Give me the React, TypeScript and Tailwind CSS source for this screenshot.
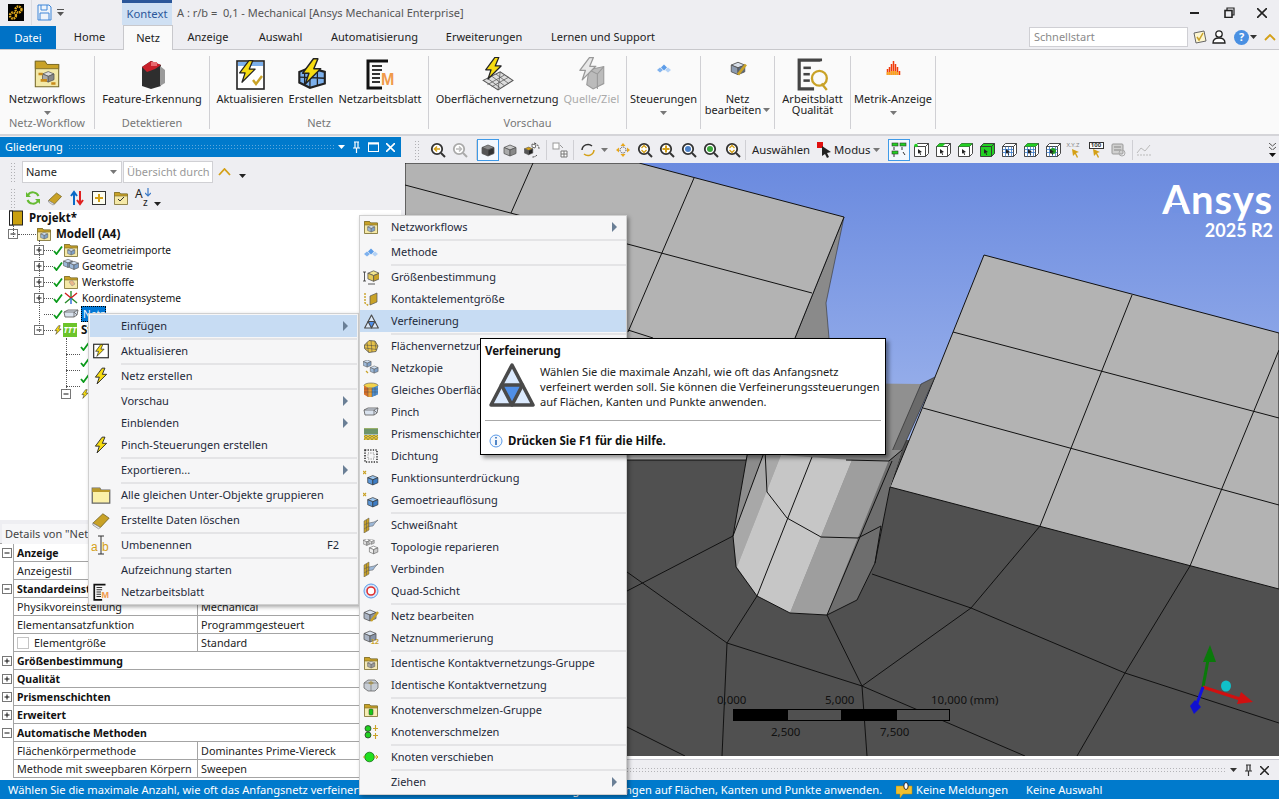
import type { ReactNode } from 'react';

const GOLD = '#c9a227';

const I = ({ s = 16, v = 16, children }: { s?: number; v?: number; children: ReactNode }) => (
  <svg width={s} height={s} viewBox={`0 0 ${v} ${v}`} className="block shrink-0">{children}</svg>
);

const BoltPath = ({ fill = '#f7dc11', stroke = '#222', w = 0.8 }: { fill?: string; stroke?: string; w?: number }) => (
  <path d="M9 1 3 9h3.5L4.5 15 13 6.5H9.2L11.5 1z" fill={fill} stroke={stroke} strokeWidth={w} strokeLinejoin="round" />
);
const BoxShape = ({ t = '#cfdff2', l = '#9db8d8', r = '#7fa0c8', st = '#555' }: { t?: string; l?: string; r?: string; st?: string }) => (
  <g stroke={st} strokeWidth="0.8" strokeLinejoin="round">
    <path d="M8 3 14 5.5 8 8 2 5.5z" fill={t} />
    <path d="M2 5.5 8 8v6l-6-2.5z" fill={l} />
    <path d="M14 5.5 8 8v6l6-2.5z" fill={r} />
  </g>
);
const FolderShape = ({ body = '#f5e9a8' }: { body?: string }) => (
  <g>
    <path d="M1.5 14.5V2.5h5l1 1.5h7v10.5z" fill={body} stroke="#77692a" strokeWidth="0.8" />
    <path d="M1.5 2.5h5l1 1.5h7v2h-13z" fill={GOLD} stroke="#77692a" strokeWidth="0.6" />
  </g>
);

const Bolt = ({ s = 16 }: { s?: number }) => <I s={s}><BoltPath /></I>;
const Box = ({ s = 16, t, l, r }: { s?: number; t?: string; l?: string; r?: string }) => <I s={s}><BoxShape t={t} l={l} r={r} /></I>;
const Folder = ({ children, body }: { children?: ReactNode; body?: string }) => (
  <I><FolderShape body={body} />{children}</I>
);
const MiniCube = () => (
  <g transform="translate(3.4 4.6) scale(0.6)"><BoxShape /></g>
);
const WorksheetIcon = ({ s = 16 }: { s?: number }) => (
  <I s={s} v={32}>
    <path d="M24 3H4v27h14" fill="none" stroke="#111" strokeWidth="3" />
    <path d="M8 8h10M8 12h10M8 16h8M8 20h8M8 24h8" stroke="#333" strokeWidth="2" />
    <text x="17" y="27" fontSize="16" fontWeight="700" fill="#f09a4a" fontFamily="Liberation Sans, sans-serif">M</text>
  </I>
);
const Eraser = () => (
  <I>
    <path d="M1.5 10.5 9.5 3l5 3.5-7 7.5z" fill={GOLD} stroke="#6a5a1a" strokeWidth="0.7" />
    <path d="M1.5 10.5 7.5 14 6 15 1.5 12z" fill="#eee" stroke="#888" strokeWidth="0.7" />
  </I>
);
const RefineIcon = ({ s = 16, light = '#dbeafe', mid = '#4f8fe8', st = '#4a4a4a' }: { s?: number; light?: string; mid?: string; st?: string }) => (
  <I s={s} v={46}>
    <path d="M23 3 44 43H2z" fill={light} stroke={st} strokeWidth="3.5" strokeLinejoin="round" />
    <path d="M12.5 23h21L23 43z" fill={mid} stroke={st} strokeWidth="3.5" strokeLinejoin="round" />
  </I>
);
const MeshPatch = () => (
  <I>
    <path d="M1.5 7 6 2.5l6 .5 3 5-2 5.5-7 1-4.5-4z" fill="#e7c24a" stroke="#444" strokeWidth="0.7" />
    <path d="M4 4.5l1.5 10M8 2.5l1 11.5M12 3.5 13 12M1.5 7l13.5 1M2 10l11.5 1.5" stroke="#444" strokeWidth="0.5" fill="none" />
  </I>
);
const MethodIcon = () => (
  <I>
    <path d="M1 10l3-2.5 3 2.5-3 2.5z" fill="#7fb2ee" />
    <path d="M5 7.5l3-3 3 3-3 3z" fill="#5c9ce8" />
    <path d="M9 10l3-2.5 3 2.5-3 2.5z" fill="#b3d2f6" />
  </I>
);
const ArrowRight = () => <span className="ml-auto mr-[9px] h-0 w-0 border-y-[5px] border-l-[5px] border-y-transparent border-l-[#6a7f96]" />;
const Caret = ({ c = '#777' }: { c?: string }) => (
  <svg width="7" height="4" viewBox="0 0 7 4" className="block shrink-0"><path d="M0 0h7L3.5 4z" fill={c} /></svg>
);
const Exp = ({ plus }: { plus?: boolean }) => (
  <svg width="10" height="10" viewBox="0 0 10 10" className="block shrink-0">
    <rect x=".5" y=".5" width="9" height="9" fill="#fff" stroke="#777" />
    <path d="M2.5 5h5" stroke="#111" />
    {plus && <path d="M5 2.5v5" stroke="#111" />}
  </svg>
);
const Tick = () => (
  <svg width="10" height="10" viewBox="0 0 10 10" className="block shrink-0"><path d="M1 6l2.5 3L9 1.5" fill="none" stroke="#0a9a1a" strokeWidth="1.8" /></svg>
);

// ---- menu icons
const menu1Icons: Record<string, ReactNode> = {
  update: (
    <I s={18} v={32}>
      <rect x="3" y="4" width="26" height="24" fill="#fff" stroke="#222" strokeWidth="2" />
      <g transform="translate(2 3) scale(1.5)"><BoltPath /></g>
    </I>
  ),
  bolt: <Bolt s={18} />,
  folder: <I s={20}><path d="M1 14.5V2.5h6l1 1.5h7v10.5z" fill="#fbf0a8" stroke="#666" /><path d="M1 2.5h6l1 1.5h7v1.5H1z" fill="#b9982a" /></I>,
  eraser: <I s={20}><path d="M1.5 10.5 9.5 3l5 3.5-7 7.5z" fill={GOLD} stroke="#6a5a1a" strokeWidth="0.6" /><path d="M1.5 10.5 7.5 14 6 15 1.5 12z" fill="#eee" stroke="#888" strokeWidth="0.6" /></I>,
  rename: (
    <I s={22} v={22}>
      <text x="1" y="17" fontSize="12" fill="#d4a017" fontFamily="Liberation Sans, sans-serif">a</text>
      <text x="12" y="17" fontSize="12" fill="#d4a017" fontFamily="Liberation Sans, sans-serif">b</text>
      <path d="M8 2h6M11 2v18M8 20h6" stroke="#333" fill="none" />
    </I>
  ),
  sheet: <WorksheetIcon s={18} />,
};

const menu2Icons: Record<string, ReactNode> = {
  wf: <Folder><MiniCube /></Folder>,
  method: <MethodIcon />,
  size: (
    <I>
      <g transform="translate(3 -1) scale(0.95)"><BoxShape t="#f3e58c" l="#e4c95a" r="#c9a227" /></g>
      <path d="M1.5 3v9M0 3h3M0 12h3M5 15h7" stroke="#333" strokeWidth="0.8" />
    </I>
  ),
  contact: (
    <I>
      <path d="M2 2v10l4 3" stroke={GOLD} strokeWidth="1.4" strokeDasharray="2 1" fill="none" />
      <path d="M7 5l7-3v9l-7 3z" fill="#c9a227" stroke="#555" strokeWidth="0.7" />
    </I>
  ),
  refine: <RefineIcon s={15} light="#dbe8f8" />,
  patch: <MeshPatch />,
  copy: (
    <I>
      <g transform="translate(-1 -2) scale(0.65)"><BoxShape /></g>
      <g transform="translate(6 4) scale(0.65)"><BoxShape /></g>
      <path d="M3 11l2 2" stroke={GOLD} strokeWidth="1.2" />
    </I>
  ),
  uniform: (
    <I>
      <ellipse cx="8" cy="3.5" rx="7" ry="2.5" fill="#f2d24a" stroke="#555" strokeWidth="0.6" />
      <path d="M1 3.5v9L5 15V6z" fill="#d8712a" />
      <path d="M5 6v9h4V6z" fill="#e8a03a" />
      <path d="M9 6v9l6-2.5v-9z" fill="#4f8fd0" />
      <path d="M1 7l14 0M1 10l14 0M5 6v9M9 6v9M12 5v9" stroke="#444" strokeWidth="0.4" />
    </I>
  ),
  pinch: (
    <I>
      <path d="M1 6l4-2h10l-1 5-3 2H2z" fill="#d9e2ee" stroke="#666" strokeWidth="0.9" />
      <path d="M1 6h10l3 3M11 6v5M11 6l4-2" stroke="#666" strokeWidth="0.8" fill="none" />
    </I>
  ),
  prism: (
    <I>
      <rect x="1" y="2" width="14" height="6" fill="#9ab06a" />
      <path d="M1 4h14M1 6h14M1 8h14" stroke="#2a6a6a" strokeWidth="0.8" />
      <rect x="1" y="9" width="14" height="5" fill="#e8c830" />
      <path d="M1 11l2-2 2 2 2-2 2 2 2-2 2 2 2-2M1 14l2-3 2 3 2-3 2 3 2-3 2 3 2-3" stroke="#555" strokeWidth="0.5" fill="none" />
    </I>
  ),
  gasket: (
    <I>
      <rect x="2" y="2" width="12" height="12" fill="none" stroke="#333" strokeWidth="1.6" strokeDasharray="1.3 1.3" />
      <rect x="5" y="5" width="6" height="6" fill="none" stroke="#777" strokeWidth="1" strokeDasharray="1 1.4" />
    </I>
  ),
  suppress: (
    <I>
      <path d="M0 1l3 3M3 1 0 4" stroke={GOLD} strokeWidth="1.2" />
      <g transform="translate(3 3) scale(0.85)"><BoxShape t="#9bc4ec" l="#5b97d8" r="#3c7cc4" st="#333" /></g>
    </I>
  ),
  weld: (
    <I>
      <path d="M1 4l5-3v12l-5 3z" fill={GOLD} stroke="#555" strokeWidth="0.5" />
      <path d="M1 8l5-2.5M1 12l5-3M3.5 3v11" stroke="#555" strokeWidth="0.5" />
      <path d="M6 6l5-1 4-2-3 3-2 3-4 .5z" fill="#9db8d8" stroke="#555" strokeWidth="0.5" />
    </I>
  ),
  topo: (
    <I>
      <g transform="translate(-1 -2) scale(0.6)"><BoxShape t="#fff" l="#ddd" r="#bbb" /></g>
      <g transform="translate(5 -1) scale(0.45)"><BoxShape t="#fff" l="#ddd" r="#bbb" /></g>
      <g transform="translate(5 5) scale(0.7)"><BoxShape t="#fff" l="#eee" r="#ccc" /></g>
    </I>
  ),
  quad: (
    <I>
      <circle cx="8" cy="8" r="7" fill="#d5e6fa" stroke="#5a9ae8" strokeWidth="1" />
      <circle cx="8" cy="8" r="4" fill="#fff" stroke="#e03030" strokeWidth="1.6" />
    </I>
  ),
  edit: (
    <I>
      <g transform="translate(-1 -1)"><BoxShape t="#d9e2ee" l="#aab4c4" r="#8894a8" /></g>
      <path d="M15 4 8 13" stroke={GOLD} strokeWidth="2.4" />
    </I>
  ),
  number: (
    <I>
      <g transform="translate(-1 -2)"><BoxShape t="#d9e2ee" l="#aab4c4" r="#8894a8" /></g>
      <text x="8" y="14" fontSize="7" fontWeight="700" fill={GOLD} fontFamily="Liberation Sans, sans-serif">12</text>
    </I>
  ),
  idgroup: <Folder body="#f3e8b8"><g transform="translate(3.4 4.6) scale(0.6)"><BoxShape t="#ddd" l="#aaa" r="#999" /></g></Folder>,
  idcontact: <I><path d="M1 6l4-3h7l3 3v5l-3 3H5l-4-3z" fill="#c6ccd4" stroke="#666" strokeWidth="0.8" /><path d="M5 6l3-2 3 2-3 2z" fill="#b9a45a" /><path d="M1 6h14M8 8v6" stroke="#666" strokeWidth="0.6" /></I>,
  mergegroup: <Folder body="#f7edb4"><rect x="6" y="7" width="4" height="6" rx="1" fill="#18c818" stroke="#333" strokeWidth="0.5" /></Folder>,
  merge: (
    <I>
      <circle cx="5" cy="4.5" r="3" fill="#22d022" stroke="#222" strokeWidth="0.7" />
      <circle cx="5" cy="11" r="3" fill="#22d022" stroke="#222" strokeWidth="0.7" />
      <path d="M12.5 1v6M12.5 9v6M10 4.5h5M10 11.5h5" stroke={GOLD} strokeWidth="1.1" />
    </I>
  ),
  move: (
    <I>
      <circle cx="6.5" cy="8" r="4.8" fill="#20e020" stroke="#1a6a1a" strokeWidth="0.8" />
      <path d="M0 8h2M11 8h4M13 6l2 2-2 2" stroke="#d4a017" strokeWidth="1" fill="none" />
    </I>
  ),
};

const Sep = () => <div className="ml-[31px] h-[3px] flex items-center"><div className="h-[2px] w-full bg-[#e4e4e6]" /></div>;

type MenuEntry = { t: string; i?: ReactNode; sub?: boolean; hot?: boolean; key2?: string } | 'sep';

const MenuRow = ({ e }: { e: Exclude<MenuEntry, 'sep'> }) => (
  <div className={`flex h-[22px] items-center ${e.hot ? 'bg-[#c7dcf3]' : ''}`}>
    <span className="flex w-[22px] shrink-0 justify-center">{e.i}</span>
    <span className="ml-[9px] whitespace-nowrap text-[#1e2a3a]">{e.t}</span>
    {e.key2 && <span className="ml-auto mr-[18px] text-[#1e2a3a]">{e.key2}</span>}
    {e.sub && <ArrowRight />}
  </div>
);

const Menu = ({ items }: { items: MenuEntry[] }) => (
  <>
    {items.map((e, n) => (e === 'sep' ? <Sep key={n} /> : <MenuRow key={n} e={e} />))}
  </>
);

const menu1: MenuEntry[] = [
  { t: 'Einfügen', sub: true, hot: true }, 'sep',
  { t: 'Aktualisieren', i: menu1Icons.update }, 'sep',
  { t: 'Netz erstellen', i: menu1Icons.bolt }, 'sep',
  { t: 'Vorschau', sub: true },
  { t: 'Einblenden', sub: true },
  { t: 'Pinch-Steuerungen erstellen', i: menu1Icons.bolt }, 'sep',
  { t: 'Exportieren...', sub: true }, 'sep',
  { t: 'Alle gleichen Unter-Objekte gruppieren', i: menu1Icons.folder }, 'sep',
  { t: 'Erstellte Daten löschen', i: menu1Icons.eraser }, 'sep',
  { t: 'Umbenennen', i: menu1Icons.rename, key2: 'F2' }, 'sep',
  { t: 'Aufzeichnung starten' },
  { t: 'Netzarbeitsblatt', i: menu1Icons.sheet },
];

const m = menu2Icons;
const menu2: MenuEntry[] = [
  { t: 'Netzworkflows', i: m.wf, sub: true }, 'sep',
  { t: 'Methode', i: m.method }, 'sep',
  { t: 'Größenbestimmung', i: m.size },
  { t: 'Kontaktelementgröße', i: m.contact },
  { t: 'Verfeinerung', i: m.refine, hot: true }, 'sep',
  { t: 'Flächenvernetzung', i: m.patch },
  { t: 'Netzkopie', i: m.copy },
  { t: 'Gleiches Oberflächennetz', i: m.uniform },
  { t: 'Pinch', i: m.pinch },
  { t: 'Prismenschichten', i: m.prism },
  { t: 'Dichtung', i: m.gasket },
  { t: 'Funktionsunterdrückung', i: m.suppress },
  { t: 'Gemoetrieauflösung', i: m.suppress }, 'sep',
  { t: 'Schweißnaht', i: m.weld },
  { t: 'Topologie reparieren', i: m.topo },
  { t: 'Verbinden', i: m.weld },
  { t: 'Quad-Schicht', i: m.quad }, 'sep',
  { t: 'Netz bearbeiten', i: m.edit },
  { t: 'Netznummerierung', i: m.number }, 'sep',
  { t: 'Identische Kontaktvernetzungs-Gruppe', i: m.idgroup },
  { t: 'Identische Kontaktvernetzung', i: m.idcontact }, 'sep',
  { t: 'Knotenverschmelzen-Gruppe', i: m.mergegroup },
  { t: 'Knotenverschmelzen', i: m.merge }, 'sep',
  { t: 'Knoten verschieben', i: m.move }, 'sep',
  { t: 'Ziehen', sub: true },
];

// ---- title and ribbon
const TitleBar = () => (
  <div className="flex h-[25px] shrink-0 items-center">
    <div className="ml-[8px] flex h-[17px] w-[16px] items-center justify-center bg-black">
      <svg width="16" height="17" viewBox="0 0 16 17">
        <circle cx="10.5" cy="5.5" r="3" fill="none" stroke="#e0a81c" strokeWidth="2.4" strokeDasharray="1.6 .8" />
        <circle cx="5" cy="11.5" r="3" fill="none" stroke="#e0a81c" strokeWidth="2.4" strokeDasharray="1.6 .8" />
      </svg>
    </div>
    <div className="ml-[7px] mr-[5px] h-[25px] w-px bg-[#dcdce0]" />
    <svg width="15" height="17" viewBox="0 0 15 17" className="block">
      <path d="M1 1h11l2 2v13H1z" fill="#eef4fb" stroke="#3f86d8" />
      <path d="M4 1v5h6V1M3 16V9h9v7" fill="none" stroke="#3f86d8" />
    </svg>
    <div className="ml-[5px] flex flex-col items-center gap-[2px]">
      <div className="h-px w-[7px] bg-[#555]" />
      <Caret c="#555" />
    </div>
    <div className="ml-[58px] flex h-[25px] w-[50px] items-center justify-center border-t-[3px] border-[#2b579a] bg-[#cfe0f3] pb-[1px] text-[11.3px] text-[#2b579a]">Kontext</div>
    <div className="ml-[5px] whitespace-pre text-[#555]">A : r/b =  0,1 - Mechanical [Ansys Mechanical Enterprise]</div>
    <div className="ml-auto mr-[12px] flex items-center">
      <div className="h-[2px] w-[9px] bg-[#222]" />
      <svg width="11" height="11" viewBox="0 0 11 11" className="ml-[25px]">
        <path d="M3 3V1h7v7H8" fill="none" stroke="#222" strokeWidth="1.2" />
        <rect x="1" y="3.5" width="7" height="7" fill="none" stroke="#222" strokeWidth="1.6" />
      </svg>
      <svg width="10" height="10" viewBox="0 0 10 10" className="ml-[22px]"><path d="M0 0l10 10M10 0 0 10" stroke="#222" strokeWidth="1.6" /></svg>
    </div>
  </div>
);

const tabs = [
  { t: 'Home', w: 'w-[67px]' },
  { t: 'Netz', w: 'w-[50px]', on: true },
  { t: 'Anzeige', w: 'w-[70px]' },
  { t: 'Auswahl', w: 'w-[75px]' },
  { t: 'Automatisierung', w: 'w-[113px]' },
  { t: 'Erweiterungen', w: 'w-[106px]' },
  { t: 'Lernen und Support', w: 'w-[132px]' },
];

const TabRow = () => (
  <div className="flex h-[25px] shrink-0 items-stretch border-b border-[#c8c8cc]">
    <div className="mt-[1px] flex w-[56px] items-center justify-center bg-[#0072c6] text-white">Datei</div>
    {tabs.map((x) => (
      <div key={x.t} className={`${x.w} flex items-center justify-center text-[#222] ${x.on ? 'relative z-10 h-[25px] border-x border-t border-[#c8c8cc] bg-[#fafafa]' : ''}`}>{x.t}</div>
    ))}
    <div className="ml-auto mb-[2px] mt-[2px] flex items-center">
      <div className="flex h-[20px] w-[159px] items-center border border-[#cfcfd4] bg-white pl-[4px] text-[#8a8a8a]">Schnellstart</div>
      <div className="ml-[4px]">
        <I>
          <path d="M2 4l10-2 2 10-10 2z" fill="#fdf6d0" stroke="#666" />
          <path d="M5 8l2 3 4-7" fill="none" stroke="#c9a227" strokeWidth="1.5" />
        </I>
      </div>
      <div className="ml-[3px]">
        <I>
          <circle cx="8" cy="5" r="3.2" fill="#fff" stroke="#222" strokeWidth="1.3" />
          <path d="M2 14c0-3 2-5 6-5s6 2 6 5z" fill="#fff" stroke="#222" strokeWidth="1.3" />
        </I>
      </div>
      <div className="ml-[7px] flex h-[15px] w-[15px] items-center justify-center rounded-full bg-[#4a90e2] text-[11px] font-bold text-white">?</div>
      <div className="ml-[1px]"><Caret c="#333" /></div>
      <svg width="12" height="7" viewBox="0 0 12 7" className="ml-[7px] mr-[3px]"><path d="M1 6l5-5 5 5" fill="none" stroke="#d4a017" strokeWidth="1.8" /></svg>
    </div>
  </div>
);

const Rb = {
  wf: (
    <I s={34} v={32}>
      <path d="M5 28V4h9l2 3h11v21z" fill="#f3e9a8" stroke="#776a2a" />
      <path d="M5 4h9l2 3h11v4H5z" fill={GOLD} stroke="#776a2a" strokeWidth=".8" />
      <g transform="translate(10 11) scale(0.9)"><BoxShape t="#ddd" l="#aaa" r="#888" /></g>
      <path d="M8 16h4M10 22h6M20 25h4" stroke="#c98a1a" strokeWidth="2.4" />
    </I>
  ),
  feature: (
    <I s={32} v={32}>
      <path d="M6 9 15 3l10 4v21l-10 3-9-3z" fill="#2e2e2e" />
      <path d="M24 8l5 4v13l-5 3z" fill="#9a9a9a" />
      <path d="M6 9l9-6 10 4-6 4-8 3z" fill="#c8202a" />
      <path d="M15 4h6v4h-6z" fill="#e86a70" />
    </I>
  ),
  update: (
    <I s={32} v={32}>
      <rect x="3" y="3" width="27" height="28" fill="#fff" stroke="#222" strokeWidth="1.6" />
      <rect x="4" y="4" width="25" height="4" fill="#7cb0ec" />
      <path d="M19 22l3 4 6-8" fill="none" stroke="#c9a227" strokeWidth="2.4" />
      <g transform="translate(1 1) scale(1.55)"><BoltPath /></g>
    </I>
  ),
  build: (
    <I s={34} v={32}>
      <path d="M5 14l10-4 14 4v11l-14 4-10-5z" fill="#7cb0ec" stroke="#222" strokeWidth="2" />
      <path d="M5 19l24 1M15 10v19M22 12v15M10 12v15" stroke="#222" strokeWidth="1.2" />
      <g transform="translate(3 0) scale(1.7)"><BoltPath /></g>
    </I>
  ),
  preview: (
    <I s={34} v={32}>
      <path d="M3 22 19 14l12 8-14 9z" fill="#ddd" stroke="#555" />
      <path d="M7 20l12 9M11 18l12 9M15 16l12 9M19 14l-2 17M7 26l16-9M11 28l16-9" stroke="#555" strokeWidth=".7" />
      <g transform="translate(1 -1) scale(1.45)"><BoltPath /></g>
    </I>
  ),
  src: (
    <I s={34} v={32}>
      <path d="M14 12l14-3v16l-10 5-6-4z" fill="#bbb" stroke="#999" />
      <path d="M14 12l8 4v14M22 16l6-7" stroke="#999" fill="none" />
      <g transform="translate(1 -1) scale(1.5)"><BoltPath fill="#e8e8e8" stroke="#999" /></g>
    </I>
  ),
  edit: (
    <I s={18}>
      <g transform="translate(0 -1)"><BoxShape t="#d8dfe8" l="#8c9bb0" r="#5c6a80" /></g>
      <path d="M15 4 8 13" stroke={GOLD} strokeWidth="2.4" />
    </I>
  ),
  quality: (
    <I s={34} v={32}>
      <path d="M23 4V3H3v27h14" fill="none" stroke="#444" strokeWidth="3" />
      <rect x="7" y="9" width="7" height="2.4" fill="#444" />
      <rect x="7" y="15" width="6" height="2.4" fill="#444" />
      <rect x="7" y="21" width="6" height="2.4" fill="#444" />
      <circle cx="22" cy="20" r="7" fill="none" stroke="#c9a227" strokeWidth="2.2" />
      <path d="M24 25l5 6" stroke="#c9a227" strokeWidth="2.2" />
    </I>
  ),
  metric: (
    <I s={16}>
      <path d="M2.5 15V9M4.5 15V7M6.5 15V4M8.5 15V1M10.5 15V4M12.5 15V7M14.5 15v-4" stroke="#f03a0a" strokeWidth="1.5" />
      <path d="M2.5 15v-3M4.5 15v-3M6.5 15v-4M8.5 15v-4M10.5 15v-4M12.5 15v-3" stroke="#f8a818" strokeWidth="1.5" />
    </I>
  ),
};

const RbBtn = ({ icon, label, dim, caret, smallIcon }: { icon: ReactNode; label: ReactNode; dim?: boolean; caret?: boolean; smallIcon?: boolean }) => (
  <div className="flex flex-col items-center">
    <div className={`flex h-[36px] justify-center ${smallIcon ? 'items-start pt-[4px]' : 'items-center'}`}>{icon}</div>
    <div className={`mt-[1px] whitespace-nowrap text-center leading-[11px] ${dim ? 'text-[#aaa]' : 'text-[#222]'}`}>{label}</div>
    {caret && <div className="mt-[7px]"><Caret /></div>}
  </div>
);

const RbGroup = ({ w, title, children }: { w: string; title?: string; children: ReactNode }) => (
  <div className={`relative flex flex-col border-r border-[#d0d0d4] ${w}`}>
    <div className="flex flex-1 justify-center">{children}</div>
    {title && <div className="h-[13px] text-center leading-[13px] text-[#777]">{title}</div>}
  </div>
);

const Ribbon = () => (
  <div className="flex h-[86px] shrink-0 border-b-2 border-[#d4d4d8] bg-[#fafafa] pb-[5px] pt-[6px]">
    <RbGroup w="w-[95px]" title="Netz-Workflow">
      <RbBtn icon={Rb.wf} label="Netzworkflows" caret />
    </RbGroup>
    <RbGroup w="w-[115px]" title="Detektieren">
      <RbBtn icon={Rb.feature} label="Feature-Erkennung" />
    </RbGroup>
    <RbGroup w="w-[219px]" title="Netz">
      <div className="flex gap-[5px]">
        <RbBtn icon={Rb.update} label="Aktualisieren" />
        <RbBtn icon={Rb.build} label="Erstellen" />
        <RbBtn icon={<WorksheetIcon s={32} />} label="Netzarbeitsblatt" />
      </div>
    </RbGroup>
    <RbGroup w="w-[198px]" title="Vorschau">
      <div className="flex gap-[5px]">
        <RbBtn icon={Rb.preview} label="Oberflächenvernetzung" />
        <RbBtn icon={Rb.src} label="Quelle/Ziel" dim />
      </div>
    </RbGroup>
    <RbGroup w="w-[74px]">
      <RbBtn smallIcon icon={<MethodIcon />} label="Steuerungen" caret />
    </RbGroup>
    <RbGroup w="w-[74px]">
      <RbBtn smallIcon icon={Rb.edit} label={<>Netz<br /><span className="inline-flex items-center gap-[2px]">bearbeiten<Caret /></span></>} />
    </RbGroup>
    <RbGroup w="w-[76px]">
      <RbBtn icon={Rb.quality} label={<>Arbeitsblatt<br />Qualität</>} />
    </RbGroup>
    <RbGroup w="w-[85px]">
      <RbBtn smallIcon icon={Rb.metric} label="Metrik-Anzeige" caret />
    </RbGroup>
  </div>
);

// ---- left panel
const Grip = () => <div className="h-[20px] w-[6px] shrink-0 bg-[radial-gradient(#b0b0b4_1px,transparent_1px)] bg-[length:3px_3px]" />;

const BookIcon = () => (
  <I>
    <rect x="1.5" y="1" width="13" height="14" fill="#c9a010" stroke="#222" />
    <rect x="1.5" y="1" width="3" height="14" fill="#fff" stroke="#222" />
  </I>
);

const OutlineHeader = () => (
  <div className="flex h-[20px] items-center bg-[#007acc] pl-[5px] pr-[6px] text-white">
    <span className="mr-[5px]">Gliederung</span>
    <div className="h-[6px] flex-1 bg-[radial-gradient(#5fa8dc_1px,transparent_1px)] bg-[length:3px_3px]" />
    <div className="ml-[2px] flex items-center gap-[7px]">
      <Caret c="#fff" />
      <svg width="9" height="12" viewBox="0 0 9 12"><path d="M2 1h5M3 1v6h3V1M1 7h7M4.5 7v5" fill="none" stroke="#fff" strokeWidth="1.2" /></svg>
      <svg width="11" height="10" viewBox="0 0 11 10"><rect x=".5" y="1" width="10" height="8.5" fill="none" stroke="#fff" /><path d="M0 1.5h11" stroke="#fff" strokeWidth="2" /></svg>
      <svg width="9" height="9" viewBox="0 0 9 9"><path d="M0 0l9 9M9 0 0 9" stroke="#fff" strokeWidth="1.6" /></svg>
    </div>
  </div>
);

const OutlineTools = () => (
  <div className="h-[53px] bg-[#eeeef2]">
    <div className="flex h-[26px] items-center pl-[10px] pt-[3px]">
      <Grip />
      <div className="ml-[6px] flex h-[22px] w-[100px] items-center justify-between border border-[#d0d0d4] bg-white pl-[3px] pr-[4px] text-[#222]">Name<Caret /></div>
      <div className="ml-[1px] flex h-[22px] w-[90px] items-center overflow-hidden whitespace-nowrap border border-[#d0d0d4] bg-white pl-[3px] text-[#999]">Übersicht durch</div>
      <svg width="13" height="8" viewBox="0 0 13 8" className="ml-[5px]"><path d="M1 7l5.5-6L12 7" fill="none" stroke="#d4a017" strokeWidth="1.8" /></svg>
      <div className="ml-[8px] mt-[8px] flex flex-col gap-px"><Caret c="#222" /></div>
    </div>
    <div className="flex h-[27px] items-center pl-[10px] pt-[2px]">
      <Grip />
      <div className="ml-[9px] flex items-center gap-[6px]">
        <I>
          <path d="M13.5 6A6 6 0 0 0 3 5M2.5 10A6 6 0 0 0 13 11" fill="none" stroke="#66bb33" strokeWidth="2" />
          <path d="M1 2v5h5zM15 14V9h-5z" fill="#66bb33" />
        </I>
        <Eraser />
        <I>
          <path d="M5 15V3M2 6l3-4 3 4" fill="none" stroke="#0a6ac8" strokeWidth="2" />
          <path d="M11 1v12M8 10l3 4 3-4" fill="none" stroke="#e02020" strokeWidth="2" />
        </I>
        <I>
          <rect x="1.5" y="1.5" width="13" height="13" fill="#fdfdf0" stroke="#333" />
          <path d="M8 4v8M4 8h8" stroke="#d4a017" strokeWidth="2" />
        </I>
        <Folder><path d="M5 9l2 2 4-4" stroke="#333" strokeWidth="1" fill="none" /></Folder>
        <div className="flex items-end gap-[2px]">
          <div className="relative h-[20px] w-[17px] text-[12px] leading-none text-[#222]">
            <span className="absolute left-0 top-0">A</span>
            <span className="absolute left-[8px] top-[9px] text-[10px]">z</span>
            <svg width="6" height="9" viewBox="0 0 6 9" className="absolute left-[10px] top-0"><path d="M3 0v8M0 5l3 3 3-3" fill="none" stroke="#3a7ac8" strokeWidth="1.2" /></svg>
          </div>
          <div className="mb-[2px]"><Caret c="#222" /></div>
        </div>
      </div>
    </div>
  </div>
);

const TreeRow = ({ left, exp, plus, tick, icon, label, bold, lead, sel }: { left: string; exp?: boolean; plus?: boolean; tick?: boolean; icon?: ReactNode; label?: string; bold?: boolean; lead?: string; sel?: boolean }) => (
  <div className={`flex h-4 items-center ${left}`}>
    {exp ? <Exp plus={plus} /> : <span className="w-[10px] shrink-0" />}
    {lead && <span className={`${lead} shrink-0 border-t border-dotted border-[#555]`} />}
    {tick && <Tick />}
    {icon}
    {label && (
      <span className={`whitespace-nowrap text-[#111] ${bold ? 'ml-[4px] text-[11.5px] font-bold' : 'text-[10.2px]'} ${sel ? 'ml-[2px] w-[25px] overflow-hidden border border-dotted border-black bg-[#0078d7] pl-[1px] leading-[14px] text-white' : ''} ${!bold && !sel ? 'ml-[3px]' : ''}`}>{label}</span>
    )}
  </div>
);

const Tree = () => (
  <div className="relative flex-1 bg-white">
    <div className="absolute left-[13px] top-[15px] h-[12px] border-l border-dotted border-[#555]" />
    <div className="absolute left-[39px] top-[30px] h-[92px] border-l border-dotted border-[#555]" />
    <div className="absolute left-[66px] top-[128px] h-[52px] border-l border-dotted border-[#555]" />
    <div className="absolute left-[66px] top-[144px] w-[14px] border-t border-dotted border-[#555]" />
    <div className="absolute left-[66px] top-[160px] w-[14px] border-t border-dotted border-[#555]" />
    <div className="absolute left-[66px] top-[176px] w-[14px] border-t border-dotted border-[#555]" />
    <div className="pl-[8px] flex h-4 items-center"><BookIcon /><span className="ml-[5px] text-[11.5px] font-bold text-[#111]">Projekt*</span></div>
    <TreeRow left="pl-[8px]" exp lead="w-[18px]" icon={<Folder><MiniCube /></Folder>} label="Modell (A4)" bold />
    <TreeRow left="pl-[34px]" exp plus lead="w-[9px]" tick icon={<Folder><MiniCube /></Folder>} label="Geometrieimporte" />
    <TreeRow left="pl-[34px]" exp plus lead="w-[9px]" tick icon={<I><g transform="translate(-1 -1) scale(0.75)"><BoxShape /></g><g transform="translate(5 1) scale(0.75)"><BoxShape /></g></I>} label="Geometrie" />
    <TreeRow left="pl-[34px]" exp plus lead="w-[9px]" tick icon={<Folder><path d="M6 8l3-2 3 4-3 2z" fill="#eab78a" stroke="#888" strokeWidth=".5" /></Folder>} label="Werkstoffe" />
    <TreeRow left="pl-[34px]" exp plus lead="w-[9px]" tick icon={<I><path d="M8 8V1M8 8 2 13M8 8l6 5" stroke="#2a8a2a" strokeWidth="1.4" /><path d="M8 8 2 3M8 8l6-5" stroke="#d02020" strokeWidth="1.4" /><path d="M8 8v6" stroke="#2a6ad8" strokeWidth="1.4" /></I>} label="Koordinatensysteme" />
    <TreeRow left="pl-[34px]" lead="w-[9px]" tick icon={m.pinch} label="Netz" sel />
    <TreeRow left="pl-[34px]" exp lead="w-[9px]" icon={<span className="flex items-center"><svg width="10" height="16" viewBox="0 0 16 16"><BoltPath /></svg><span className="h-[14px] w-[14px] bg-[#6cc42a] text-center text-[8px] font-bold italic leading-[14px] text-white">TTT</span></span>} label="Statik" bold />
    <div className="flex h-4 items-center pl-[80px]"><Tick /></div>
    <div className="flex h-4 items-center pl-[80px]"><Tick /></div>
    <div className="flex h-4 items-center pl-[80px]"><Tick /></div>
    <div className="flex h-4 items-center pl-[61px]"><Exp /><span className="ml-[9px]"><svg width="10" height="16" viewBox="0 0 16 16"><BoltPath /></svg></span></div>
  </div>
);

type DetailRow = { a: string; b?: string; g?: 'open' | 'closed'; box?: boolean };
const detailRows: DetailRow[] = [
  { a: 'Anzeige', g: 'open' },
  { a: 'Anzeigestil', b: 'Körperfarbe' },
  { a: 'Standardeinstellungen', g: 'open' },
  { a: 'Physikvoreinstellung', b: 'Mechanical' },
  { a: 'Elementansatzfunktion', b: 'Programmgesteuert' },
  { a: 'Elementgröße', b: 'Standard', box: true },
  { a: 'Größenbestimmung', g: 'closed' },
  { a: 'Qualität', g: 'closed' },
  { a: 'Prismenschichten', g: 'closed' },
  { a: 'Erweitert', g: 'closed' },
  { a: 'Automatische Methoden', g: 'open' },
  { a: 'Flächenkörpermethode', b: 'Dominantes Prime-Viereck' },
  { a: 'Methode mit sweepbaren Körpern', b: 'Sweepen' },
];

const Details = () => (
  <div className="h-[260px] shrink-0 overflow-hidden bg-white">
    <div className="flex h-[24px] items-end bg-[#eeeef2] pl-[2px]">
      <div className="h-[20px] w-[120px] whitespace-nowrap bg-[#f6f6f8] pl-[3px] leading-[20px] text-[#444]">Details von "Netz"</div>
    </div>
    <div className="border-t border-[#a4a4a4] -mt-px">
      {detailRows.map((r) => (
        <div key={r.a} className="flex h-[18px] items-center">
          <div className="flex h-full w-[13px] shrink-0 items-center justify-center bg-white">
            {r.g && <Exp plus={r.g === 'closed'} />}
          </div>
          <div className="flex h-full flex-1 items-center border-b border-l border-[#a4a4a4]">
            <div className={`flex h-full items-center whitespace-nowrap pl-[3px] ${r.g ? 'flex-1 text-[10.5px] font-bold text-[#111]' : 'w-[184px] border-r border-[#a4a4a4] text-[10.8px] text-[#222]'}`}>
              {r.box && <span className="mr-[5px] h-[12px] w-[12px] border border-[#c4c4c4] bg-white" />}
              {r.a}
            </div>
            {r.b && <div className="pl-[3px] text-[10.8px] text-[#222]">{r.b}</div>}
          </div>
        </div>
      ))}
    </div>
  </div>
);

// ---- graphics toolbar
const Mag = ({ dim, children }: { dim?: boolean; children?: ReactNode }) => (
  <I>
    <circle cx="7" cy="7" r="5.2" fill="#fff" stroke={dim ? '#aaa' : '#333'} strokeWidth="1.8" />
    <path d="M11 11l4 4" stroke={dim ? '#aaa' : '#333'} strokeWidth="2" />
    {children}
  </I>
);
const Updown = () => <path d="M4.5 6 7 3.5 9.5 6M4.5 8 7 10.5 9.5 8" fill="none" stroke="#d4a017" strokeWidth="1.3" />;
const SelBase = ({ fill = '#fff', children }: { fill?: string; children?: ReactNode }) => (
  <I>
    <path d="M1.5 4.5l3-3h11v10l-3 3h-11z" fill={fill} stroke="#333" strokeWidth=".9" />
    <path d="M1.5 4.5h11v10M12.5 4.5l3-3" fill="none" stroke="#333" strokeWidth=".9" />
    {children}
    <path d="M5 7l4 3-1.8.4 1 2.3-.9.4-1-2.3-1.3 1z" fill="#222" />
  </I>
);
const TbBtn = ({ children, sel }: { children: ReactNode; sel?: boolean }) => (
  <div className={`flex h-[22px] w-[22px] shrink-0 items-center justify-center ${sel ? 'border border-[#3f9ae8] bg-[#f4f8fd]' : ''}`}>{children}</div>
);
const TbSep = ({ c }: { c: string }) => <div className={`h-[20px] w-px shrink-0 bg-[#cfcfd4] ${c}`} />;

const GridCube = () => <path d="M4.5 4.5v10M7.5 4.5v10M10.5 4.5v10M1.5 7.5h11M1.5 10.5h11" stroke="#3a7ac8" strokeWidth=".8" />;

const GfxToolbar = () => (
  <div className="flex h-[27px] shrink-0 items-center bg-[#eeeef2] pl-[9px] pt-[1px]">
    <Grip />
    <div className="ml-[7px] flex items-center">
      <TbBtn><Mag><path d="M10 7H4.5M7 4.5 4.5 7 7 9.5" fill="none" stroke="#d4a017" strokeWidth="1.5" /></Mag></TbBtn>
      <TbBtn><Mag dim><path d="M4 7h5.5M7 4.5 9.5 7 7 9.5" fill="none" stroke="#bbb" strokeWidth="1.5" /></Mag></TbBtn>
      <TbSep c="ml-[5px]" />
      <TbBtn sel><Box t="#8a8a8a" l="#555" r="#333" /></TbBtn>
      <TbBtn><Box t="#c8c8c8" l="#aaa" r="#888" /></TbBtn>
      <TbBtn>
        <I>
          <g transform="translate(-1 3) scale(.7)"><BoxShape t="#d4a017" l="#555" r="#222" /></g>
          <path d="M10 1a6 6 0 0 1 5 6M13 13a6 6 0 0 1-5 2" fill="none" stroke="#333" strokeDasharray="2 1" />
          <path d="M8 2l4 1-1 3-3-1z" fill="#fff" stroke="#333" strokeWidth=".7" />
        </I>
      </TbBtn>
      <TbSep c="ml-[3px] mr-[2px]" />
      <TbBtn>
        <I>
          <rect x="1" y="1" width="6" height="6" fill="#fff" stroke="#999" />
          <path d="M9 9h6v6H9zM12 9v6M9 12h6" fill="#fff" stroke="#777" />
          <path d="M8 3l3 3" stroke="#999" />
        </I>
      </TbBtn>
      <TbSep c="ml-[2px] mr-[3px]" />
      <TbBtn>
        <I>
          <path d="M2 8a6 6 0 0 1 10-4" fill="none" stroke="#333" strokeWidth="1.5" />
          <path d="M14 8a6 6 0 0 1-10 4" fill="none" stroke="#d4a017" strokeWidth="1.5" />
        </I>
      </TbBtn>
      <div className="mx-[2px] w-[7px]"><Caret /></div>
      <span className="w-[2px]" />
      <TbBtn>
        <I>
          <path d="M8 1l2.5 3h-5zM8 15l2.5-3h-5zM1 8l3-2.5v5zM15 8l-3-2.5v5z" fill="#e8a81c" />
          <circle cx="8" cy="8" r="3" fill="none" stroke="#333" strokeDasharray="1 1" />
        </I>
      </TbBtn>
      <TbBtn><Mag><Updown /></Mag></TbBtn>
      <TbBtn><Mag><path d="M7 3.5v7M3.5 7h7" stroke="#d4a017" strokeWidth="2" /></Mag></TbBtn>
      <TbBtn><Mag><circle cx="7" cy="7" r="3" fill="#4a80c8" /></Mag></TbBtn>
      <TbBtn><Mag><circle cx="7" cy="7" r="3" fill="#3aa83a" /></Mag></TbBtn>
      <TbBtn><Mag><Updown /></Mag></TbBtn>
      <TbSep c="ml-[1px]" />
      <span className="ml-[6px] text-[11.3px] text-[#222]">Auswählen</span>
      <span className="ml-[7px]">
        <I>
          <rect x="0" y="0" width="6" height="6" fill="#e01010" />
          <path d="M5 4l9 6-4 1 2 4-2 1-2-4-3 2z" fill="#222" />
        </I>
      </span>
      <span className="ml-[1px] text-[11.3px] text-[#222]">Modus</span>
      <span className="ml-[2px]"><Caret /></span>
      <span className="w-[8px]" />
      <TbBtn sel>
        <I>
          <rect x="1" y="1" width="6" height="3" fill="#22d022" stroke="#333" strokeWidth=".6" />
          <rect x="9" y="1" width="6" height="3" fill="#22d022" stroke="#333" strokeWidth=".6" />
          <rect x="1" y="9" width="6" height="3" fill="#22d022" stroke="#333" strokeWidth=".6" />
          <path d="M3 5v3M11 5v3M12 10l2 3M3 12v3" stroke="#333" />
        </I>
      </TbBtn>
      <TbBtn><SelBase><circle cx="3" cy="3.5" r="1.8" fill="#22d022" /></SelBase></TbBtn>
      <TbBtn><SelBase><path d="M1.5 4.5l3-3h6l-3 3z" fill="#22d022" /></SelBase></TbBtn>
      <TbBtn><SelBase><path d="M1.5 4.5l3-3h11l-3 3z" fill="#22d022" /></SelBase></TbBtn>
      <TbBtn><SelBase fill="#22d022" /></TbBtn>
      <TbBtn><SelBase><GridCube /></SelBase></TbBtn>
      <TbBtn><SelBase><GridCube /><path d="M1.5 4.5l3-3h11l-3 3z" fill="#22d022" /></SelBase></TbBtn>
      <TbBtn><SelBase><GridCube /><circle cx="8" cy="9" r="3" fill="#22a022" /></SelBase></TbBtn>
      <TbBtn>
        <div className="relative h-4 w-4">
          <span className="absolute -top-[1px] left-0 whitespace-nowrap text-[6px] leading-[8px] text-[#888]">X.Y.Z</span>
          <svg width="10" height="9" viewBox="0 0 10 9" className="absolute left-[5px] top-[7px]"><path d="M0 0l7 3-3 1 2 4-1 1-2-4-2 2z" fill="#d4a017" /></svg>
        </div>
      </TbBtn>
      <TbBtn>
        <div className="relative h-4 w-4">
          <span className="absolute left-0 top-0 h-[7px] w-[15px] border border-[#333] bg-white text-center text-[6px] font-bold leading-[5px] text-[#333]">100</span>
          <svg width="10" height="9" viewBox="0 0 10 9" className="absolute left-[4px] top-[7px]"><path d="M0 0l7 3-3 1 2 4-1 1-2-4-2 2z" fill="#d4a017" /></svg>
        </div>
      </TbBtn>
      <TbBtn>
        <I>
          <rect x="1" y="2" width="11" height="10" rx="1" fill="#d0d0d0" stroke="#999" />
          <path d="M3 5h7M3 8h7" stroke="#888" />
          <circle cx="11" cy="11" r="3" fill="none" stroke="#aaa" />
        </I>
      </TbBtn>
      <TbSep c="ml-[2px]" />
      <span className="ml-[3px]">
        <I>
          <path d="M1 11l4-5 4 3 5-6" fill="none" stroke="#bbb" />
          <path d="M1 13h14" stroke="#bbb" strokeDasharray="2 1" />
        </I>
      </span>
    </div>
    <div className="ml-auto mr-[3px] flex flex-col items-center gap-[3px]">
      <svg width="7" height="7" viewBox="0 0 7 7"><path d="M0 0l3.5 3L7 0M0 4l3.5 3L7 4" fill="none" stroke="#555" /></svg>
      <Caret c="#111" />
    </div>
  </div>
);

// ---- 3d view
const lines: [number, number, number, number][] = [
  [405, 185, 812, 293], [533, 163, 511, 213], [694, 178, 628, 332], [628, 330, 653, 338],
  [1132, 295, 1040, 526], [953, 332, 1279, 418], [923, 408, 1279, 505], [1279, 350, 1190, 566],
  [627, 591, 733, 536], [627, 572, 727, 643], [727, 643, 757, 596], [727, 643, 862, 686],
  [862, 686, 827, 615], [862, 686, 971, 608], [971, 608, 1040, 526], [872, 574, 971, 608], [971, 608, 1125, 673],
  [1125, 673, 1279, 723], [1125, 673, 1190, 566], [1125, 673, 1077, 756], [862, 686, 867, 756],
  [727, 643, 722, 756], [862, 686, 1025, 756], [627, 727, 685, 756],
];

const Scene = () => (
  <svg viewBox="405 163 874 593" className="block h-full w-full" preserveAspectRatio="none">
    <defs>
      <linearGradient id="sky" x1="0" y1="0" x2="0" y2="1">
        <stop offset="0" stopColor="#6a8adf" />
        <stop offset="1" stopColor="#a6bbee" />
      </linearGradient>
    </defs>
    <rect x="405" y="163" width="874" height="320" fill="url(#sky)" />
    <rect x="405" y="440" width="874" height="316" fill="#505050" />
    <path d="M829 383 921 384 890 460H829z" fill="#909090" />
    <path d="M844 217 795 338 750 460H835L829 338 826 303z" fill="#8a8a8a" stroke="#333" strokeWidth=".6" />
    <path d="M405 163H639L844 217 795 338 750 460H405z" fill="#b3b3b3" stroke="#111" strokeWidth="1" />
    <path d="M984 255 1279 333V589L890 487 935 377z" fill="#b3b3b3" stroke="#111" strokeWidth="1" />
    <path d="M935 377 921 384 890 456 886 470 890 487 902 450z" fill="#6a6a6a" stroke="#222" strokeWidth=".6" />
    {/* pillar */}
    <path d="M748 450 733 536 736 567 757 596 790 613 827 615 857 600 875 563 890 487 902 450z" fill="#8c8c8c" />
    <path d="M765 450 733 536 737 567 781 455z" fill="#a8a8a8" />
    <path d="M781 455 737 567 757 596 790 613 852 460z" fill="#c6c6c6" />
    <path d="M852 460 790 613 827 615 889 460z" fill="#9e9e9e" />
    <path d="M889 460 827 615 857 600 875 563 890 487 902 450z" fill="#6e6e6e" />
    <g fill="none" stroke="#111" strokeWidth="1">
      <path d="M748 450 733 536 736 567 757 596 790 613 827 615 857 600 875 563 890 487" />
      <path d="M765 450 733 536M765 450 767 492 787 518 821 537 858 538 881 526M812 457 757 596M892 461 827 615" />
      <path d="M846 460 889 461 902 450M881 526 875 563" />
      {lines.map(([a, b, c, d], n) => <line key={n} x1={a} y1={b} x2={c} y2={d} />)}
    </g>
    {/* scale */}
    <rect x="733.5" y="709.5" width="216" height="11" fill="#505050" stroke="#000" />
    <rect x="733" y="709" width="55" height="12" fill="#000" />
    <rect x="841" y="709" width="56" height="12" fill="#000" />
    {/* triad */}
    <path d="M1203 687 1208 660" stroke="#0a7a0a" strokeWidth="3" />
    <path d="M1210 645 1216 662H1203z" fill="#0a7a0a" />
    <path d="M1203 687 1240 699" stroke="#d01010" strokeWidth="3" />
    <path d="M1253 702 1237 704 1241 692z" fill="#d01010" />
    <path d="M1203 687 1196 706" stroke="#1010e0" strokeWidth="3" />
    <path d="M1194 714 1190 706 1195 700 1201 707z" fill="#1010d0" />
    <ellipse cx="1226" cy="686" rx="5" ry="5.5" fill="#10c0c8" />
  </svg>
);

const Viewport = () => (
  <div className="relative min-h-0 flex-1 overflow-hidden">
    <Scene />
    <div className="absolute right-[6px] top-[14px] flex flex-col items-end text-white font-['Lato',sans-serif] font-bold">
      <div className="text-[40px] leading-[44px] tracking-[1px]">Ansys</div>
      <div className="-mt-[1px] text-[18px] leading-[20px]">2025 R2</div>
    </div>
    <div className="absolute left-[767px] top-[42px] h-[8px] w-[10px] bg-[#7191e2]" />
    <span className="absolute left-[312px] top-[529px] text-[11.5px] text-[#111]">0,000</span>
    <span className="absolute left-[420px] top-[529px] text-[11.5px] text-[#111]">5,000</span>
    <span className="absolute left-[526px] top-[529px] whitespace-nowrap text-[11.5px] text-[#111]">10,000 (mm)</span>
    <span className="absolute left-[366px] top-[561px] text-[11.5px] text-[#111]">2,500</span>
    <span className="absolute left-[475px] top-[561px] text-[11.5px] text-[#111]">7,500</span>
  </div>
);

const BottomPanel = () => (
  <div className="h-[24px] shrink-0 bg-[#eeeef2]">
    <div className="h-[4px] border-b border-[#c8c8d0] bg-white" />
    <div className="flex h-[20px] items-center pl-[2px] pr-[10px]">
      <div className="h-[6px] flex-1 bg-[radial-gradient(#b4b4b8_1px,transparent_1px)] bg-[length:3px_3px]" />
      <div className="ml-[3px] flex items-center gap-[7px]">
        <Caret c="#333" />
        <svg width="9" height="12" viewBox="0 0 9 12"><path d="M2 1h5M3 1v6h3V1M1 7h7M4.5 7v5" fill="none" stroke="#333" strokeWidth="1.2" /></svg>
        <svg width="9" height="9" viewBox="0 0 9 9"><path d="M0 0l9 9M9 0 0 9" stroke="#222" strokeWidth="1.5" /></svg>
      </div>
    </div>
  </div>
);

const StatusBar = () => (
  <div className="flex h-[19px] shrink-0 items-center bg-[#007acc] pl-[8px] text-[11.15px] text-white">
    <span className="w-[888px] shrink-0 whitespace-nowrap">Wählen Sie die maximale Anzahl, wie oft das Anfangsnetz verfeinert werden soll. Sie können die Verfeinerungssteuerungen auf Flächen, Kanten und Punkte anwenden.</span>
    <svg width="18" height="16" viewBox="0 0 18 16" className="block">
      <path d="M0 4h16v8H7l-3 4v-4H0z" fill="#f0c030" stroke="#b08a10" strokeWidth=".5" />
      <ellipse cx="10" cy="4" rx="2.2" ry="3.5" fill="#fff" stroke="#222" />
    </svg>
    <span className="ml-[2px]">Keine Meldungen</span>
    <span className="ml-[18px]">Keine Auswahl</span>
  </div>
);

const Tooltip = () => (
  <div className="absolute left-[480px] top-[338px] z-30 h-[117px] w-[406px] border border-black bg-white shadow-[3px_3px_4px_rgba(0,0,0,0.4)]">
    <div className="pl-[4px] pt-[4px] text-[11.5px] font-bold leading-[16px] text-[#111]">Verfeinerung</div>
    <div className="flex">
      <div className="ml-[8px] mt-[3px]"><RefineIcon s={46} /></div>
      <div className="ml-[5px] mt-[5px] whitespace-nowrap text-[11.1px] leading-[15px] text-[#222]">
        Wählen Sie die maximale Anzahl, wie oft das Anfangsnetz<br />
        verfeinert werden soll. Sie können die Verfeinerungssteuerungen<br />
        auf Flächen, Kanten und Punkte anwenden.
      </div>
    </div>
    <div className="mx-[4px] mt-[11px] h-px bg-[#aaa]" />
    <div className="ml-[8px] mt-[12px] flex items-center">
      <svg width="14" height="14" viewBox="0 0 14 14" className="block">
        <circle cx="7" cy="7" r="6" fill="#f4f8fd" stroke="#5a9ae8" />
        <path d="M7 3v1.5M7 6v5" stroke="#2a6ab8" strokeWidth="1.6" />
      </svg>
      <span className="ml-[5px] text-[11.5px] font-bold text-[#111]">Drücken Sie F1 für die Hilfe.</span>
    </div>
  </div>
);

export default function App() {
  return (
    <div className="relative flex h-[799px] w-[1279px] flex-col overflow-hidden bg-[#eeeef2] font-['Noto_Sans',sans-serif] text-[11px] leading-[16px]">
      <TitleBar />
      <TabRow />
      <Ribbon />
      <div className="flex min-h-0 flex-1">
        <div className="flex w-[401px] shrink-0 flex-col pt-[1px]">
          <OutlineHeader />
          <OutlineTools />
          <Tree />
          <Details />
        </div>
        <div className="w-[4px] shrink-0" />
        <div className="flex min-w-0 flex-1 flex-col">
          <GfxToolbar />
          <Viewport />
          <BottomPanel />
        </div>
      </div>
      <StatusBar />

      <div className="absolute left-[88px] top-[313px] z-10 w-[271px] border border-[#d0d0d0] bg-[#f6f6f7] p-px shadow-[2px_2px_4px_rgba(0,0,0,0.35)]">
        <Menu items={menu1} />
      </div>
      <div className="absolute left-[359px] top-[215px] z-20 w-[268px] border border-[#d0d0d0] bg-[#f6f6f7] pb-px shadow-[2px_2px_4px_rgba(0,0,0,0.35)]">
        <Menu items={menu2} />
      </div>
      <Tooltip />
    </div>
  );
}
